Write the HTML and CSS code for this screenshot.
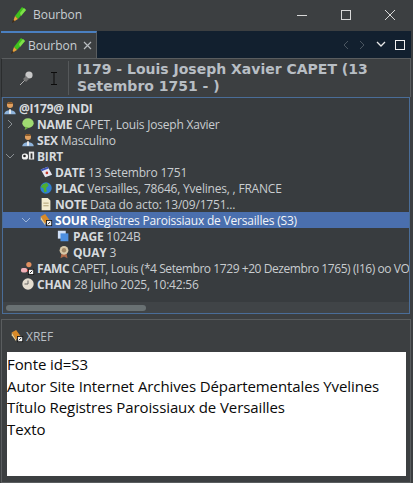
FILE: index.html
```html
<!DOCTYPE html>
<html>
   <head>
      <meta charset="UTF-8">
      <title>Bourbon</title>
      <link rel="stylesheet" href="styles.css">
   </head>
   <body>
      <div class="titlebar">
         <svg class="app-icon" width="16" height="16" viewBox="0 0 16 16"><use href="#pencil"/></svg>
         <span class="title">Bourbon</span>
         <div class="win-buttons">
            <svg width="12" height="12" viewBox="0 0 12 12"><path d="M1 6.5h10" stroke="#d8d8d8" fill="none"/></svg>
            <svg width="12" height="12" viewBox="0 0 12 12"><rect x="1.5" y="1.5" width="9" height="9" stroke="#d8d8d8" fill="none"/></svg>
            <svg width="12" height="12" viewBox="0 0 12 12"><path d="M1 1l10 10M11 1L1 11" stroke="#d8d8d8" fill="none"/></svg>
         </div>
      </div>

      <div class="tabbar">
         <div class="tab">
            <svg class="app-icon" width="16" height="16" viewBox="0 0 16 16"><use href="#pencil"/></svg>
            <span>Bourbon</span>
            <svg class="tab-close" width="9" height="9" viewBox="0 0 9 9"><path d="M1 1l7 7M8 1L1 8" stroke="#b8bcc0" stroke-width="1.2" fill="none"/></svg>
         </div>
         <div class="tab-tools">
            <svg width="8" height="10" viewBox="0 0 8 10"><path d="M6 1L2 5l4 4" stroke="#4a5560" fill="none"/></svg>
            <svg width="8" height="10" viewBox="0 0 8 10"><path d="M2 1l4 4-4 4" stroke="#4a5560" fill="none"/></svg>
            <svg class="tool-chevron" width="10" height="7" viewBox="0 0 10 7"><path d="M1 1l4 4 4-4" stroke="#e8e8e8" stroke-width="1.3" fill="none"/></svg>
            <svg width="10" height="10" viewBox="0 0 10 10"><rect x="0.5" y="0.5" width="9" height="9" stroke="#f0f0f0" fill="none"/></svg>
         </div>
      </div>

      <div class="main">
         <div class="header">
            <svg class="pin" width="16" height="16" viewBox="0 0 16 16"><path d="M1 15l5-5" stroke="#b0b0b0"/><circle cx="10" cy="5" r="3.6" fill="#c8c8c8"/><path d="M4 9l3-3 3 3-3 3z" fill="#777"/></svg>
            <svg class="cursor" width="8" height="13" viewBox="0 0 8 13"><path d="M1 .5h6M1 12.500h6M4 .5v12" stroke="#0c0c0c" fill="none"/></svg>
            <div class="header-title">I179 - Louis Joseph Xavier CAPET (13 Setembro 1751 - )</div>
         </div>

         <div class="tree">
            <div class="row">
               <svg class="ico" viewBox="0 0 16 16"><use href="#person"/></svg>
               <span class="txt"><b>@I179@ INDI</b></span>
            </div>
            <div class="row lv1">
               <svg class="twist" viewBox="0 0 10 10"><path d="M3 1l4 4-4 4" stroke="#8a8f93" fill="none"/></svg>
               <svg class="ico" viewBox="0 0 16 16"><ellipse cx="8" cy="7" rx="6.500" ry="5.500" fill="#9fdc72"/><path d="M5 11l-1 4 5-3z" fill="#6eb04a"/></svg>
               <span class="txt"><b>NAME</b> CAPET, Louis Joseph Xavier</span>
            </div>
            <div class="row no-twist">
               <svg class="ico" viewBox="0 0 16 16"><use href="#person"/></svg>
               <span class="txt"><b>SEX</b> Masculino</span>
            </div>
            <div class="row lv1">
               <svg class="twist" viewBox="0 0 10 10"><path d="M1 3l4 4 4-4" stroke="#8a8f93" fill="none"/></svg>
               <svg class="ico" viewBox="0 0 16 16"><rect x="1" y="5" width="7" height="7" rx="3" fill="#f2f2f2"/><circle cx="4" cy="8" r="1.500" fill="#222"/><rect x="9" y="3" width="6" height="9" fill="#e8e8e8"/><rect x="11" y="5" width="2" height="6" fill="#333"/></svg>
               <span class="txt"><b>BIRT</b></span>
            </div>
            <div class="row lv2">
               <svg class="ico" viewBox="0 0 16 16"><path d="M2 5l8-3 5 9-8 3z" fill="#e6e6f0"/><path d="M2 5l8-3 1 2-8 3z" fill="#3c52b8"/><circle cx="9" cy="9" r="1.500" fill="#c0392b"/></svg>
               <span class="txt"><b>DATE</b> 13 Setembro 1751</span>
            </div>
            <div class="row lv2">
               <svg class="ico" viewBox="0 0 16 16"><circle cx="8" cy="8" r="6.500" fill="#2f7fd0"/><path d="M4 4l5-2 2 3-3 3 1 4-3 1-1-5-3-1z" fill="#4fae2f"/></svg>
               <span class="txt"><b>PLAC</b> Versailles, 78646, Yvelines, , FRANCE</span>
            </div>
            <div class="row lv2">
               <svg class="ico" viewBox="0 0 16 16"><path d="M3 1h7l3 3v11H3z" fill="#f4ecd0"/><path d="M5 7h6M5 10h6" stroke="#a89868"/></svg>
               <span class="txt"><b>NOTE</b> Data do acto: 13/09/1751...</span>
            </div>
            <div class="row selected">
               <svg class="twist" viewBox="0 0 10 10"><path d="M1 3l4 4 4-4" stroke="#9fb6d8" fill="none"/></svg>
               <svg class="ico" viewBox="0 0 16 16"><use href="#book"/></svg>
               <span class="txt"><b>SOUR</b> Registres Paroissiaux de Versailles (S3)</span>
            </div>
            <div class="row lv3">
               <svg class="ico" viewBox="0 0 16 16"><rect x="1" y="2" width="9" height="9" fill="#cfe0f8"/><rect x="4" y="5" width="9" height="9" fill="#4d8fe0"/></svg>
               <span class="txt"><b>PAGE</b> 1024B</span>
            </div>
            <div class="row lv3">
               <svg class="ico" viewBox="0 0 16 16"><path d="M5 10l-1 5 4-2 4 2-1-5z" fill="#b06a4a"/><circle cx="8" cy="6" r="5" fill="#d8c8a8"/><circle cx="8" cy="6" r="2.500" fill="#a08868"/></svg>
               <span class="txt"><b>QUAY</b> 3</span>
            </div>
            <div class="row no-twist">
               <svg class="ico" viewBox="0 0 16 16"><circle cx="9" cy="4" r="3" fill="#e09060"/><path d="M5 12c0-4 8-4 8 0z" fill="#c0392b"/><rect x="0" y="8" width="7" height="5" rx="2" fill="#f0b0b8"/><rect x="8" y="9" width="7" height="7" fill="#111"/><rect x="9" y="10" width="5" height="5" fill="#f5f5f5"/><path d="M10 14l3-3" stroke="#111"/></svg>
               <span class="txt tight"><b>FAMC</b> CAPET, Louis (*4 Setembro 1729 +20 Dezembro 1765) (I16) oo VO</span>
            </div>
            <div class="row no-twist">
               <svg class="ico" viewBox="0 0 16 16"><circle cx="8" cy="8" r="6.500" fill="#e4ddd0"/><path d="M8 4v4H4" stroke="#555" fill="none"/></svg>
               <span class="txt"><b>CHAN</b> 28 Julho 2025, 10:42:56</span>
            </div>
            <div class="tree-fill"></div>
            <div class="hscroll"><div class="hscroll-thumb"></div></div>
         </div>

         <div class="xref">
            <div class="xref-head">
               <svg class="ico" viewBox="0 0 16 16"><use href="#book"/></svg>
               <span>XREF</span>
            </div>
            <div class="xref-body">
               <div>Fonte id=S3</div>
               <div>Autor Site Internet Archives Départementales Yvelines</div>
               <div>Título Registres Paroissiaux de Versailles</div>
               <div>Texto</div>
            </div>
         </div>
      </div>

      <svg class="defs" width="0" height="0">
         <defs>
            <g id="pencil">
               <path d="M5 9L12 0l4 3-8 9z" fill="#3fc21c"/>
               <path d="M10 6l4-5 2 2-5 6z" fill="#7fe04a"/>
               <path d="M5 9l3 3-5 3z" fill="#e8a33c"/>
               <path d="M2 16l1-3 2 1z" fill="#3a2410"/>
            </g>
            <g id="person">
               <circle cx="8" cy="4.500" r="3.500" fill="#e0a060"/>
               <path d="M4.500 3.500c1-3 6-3 7 0z" fill="#8a5a2a"/>
               <path d="M1.500 15c0-6 13-6 13 0z" fill="#8fb4dc"/>
               <path d="M7 9.500h2v5H7z" fill="#f4f4f4"/>
            </g>
            <g id="book">
               <path d="M2 4l5-3 5 7-5 4z" fill="#d98a28"/>
               <path d="M2 4l5 8v2L2 7z" fill="#f0d090"/>
               <rect x="8" y="8" width="7" height="7" fill="#111"/>
               <rect x="9" y="9" width="5" height="5" fill="#f5f5f5"/>
               <path d="M10 13l3-3" stroke="#111"/>
            </g>
         </defs>
      </svg>
   </body>
</html>
```
FILE: styles.css
```css
*
{
   box-sizing: border-box;
}

html, body
{
   height: 100%;
}

body
{
   width: 413px;
   height: 483px;
   margin: 0;
   overflow: hidden;
   background: #3c3f41;
   color: #d4d8db;
   font-family: "Open Sans", "Noto Sans", sans-serif;
   font-size: 12px;
}

.defs
{
   display: block;
}

.titlebar
{
   display: flex;
   align-items: center;
   height: 31px;
   padding: 0 0 2px 10px;
}

.title
{
   margin-left: 7px;
   font-size: 12px;
   color: #c8ced2;
}

.win-buttons
{
   display: flex;
   gap: 32px;
   margin-left: auto;
   padding-right: 17px;
}

.win-buttons svg
{
   display: block;
}

.tabbar
{
   display: flex;
   height: 27px;
   margin: 0 2px 0 1px;
   background: #12202f;
}

.tab
{
   display: flex;
   align-items: center;
   gap: 3px;
   width: 96px;
   padding: 0 0 0 8px;
   border-top: 2px solid #4a7fc0;
   border-right: 1px solid #5a5d5f;
   background: #3c3f41;
   font-size: 12px;
   color: #c8ced2;
}

.tab-close
{
   margin-left: 3px;
}

.tab-tools
{
   display: flex;
   align-items: center;
   gap: 8px;
   margin-left: auto;
   padding: 0 6px 0 0;
}

.tool-chevron
{
   margin-left: 2px;
   margin-right: 1px;
}

.main
{
   display: flex;
   flex-direction: column;
   height: 425px;
   margin: 0 2px 0 1px;
}

.header
{
   display: flex;
   align-items: center;
   height: 39px;
   padding-left: 17px;
   border-top: 1px solid #5a5d5f;
   border-right: 1px solid #5a5d5f;
   border-left: 1px solid #2b2d2e;
}

.pin
{
   flex: none;
}

.cursor
{
   flex: none;
   margin-left: 15px;
}

.header-title
{
   margin-left: 10px;
   padding-left: 8px;
   border-left: 1px solid #55585a;
   width: 326px;
   font-family: "DejaVu Sans", sans-serif;
   font-weight: bold;
   font-size: 14px;
   line-height: 17px;
   color: #b8bec4;
}

.tree
{
   display: flex;
   flex-direction: column;
   height: 217px;
   padding-top: 2px;
   border: 1px solid #4a6d98;
   background: #383c3f;
   margin: 0 1px 0 1px;
   overflow: hidden;
}

.row
{
   display: flex;
   flex: none;
   align-items: center;
   height: 16px;
   font-size: 12px;
   white-space: nowrap;
   color: #c9cdd0;
}

.row b
{
   color: #d6dade;
}

.ico
{
   flex: none;
   width: 14px;
   height: 14px;
   margin-right: 2px;
}

.twist
{
   flex: none;
   width: 10px;
   height: 10px;
   margin-right: 6px;
}

.txt
{
   letter-spacing: -0.2px;
}

.tight
{
   letter-spacing: -0.43px;
}

.lv1
{
   padding-left: 2px;
}

.no-twist
{
   padding-left: 18px;
}

.lv2
{
   padding-left: 36px;
}

.selected
{
   padding-left: 18px;
   background: #4a6fae;
   color: #f2f4f7;
}

.selected .twist
{
   margin-right: 8px;
}

.selected b
{
   color: #ffffff;
}

.lv3
{
   padding-left: 54px;
}

.tree-fill
{
   flex: 1;
}

.hscroll
{
   flex: none;
   height: 11px;
   padding: 3px 2px 2px 3px;
   background: #404447;
}

.hscroll-thumb
{
   width: 140px;
   height: 100%;
   border-radius: 3px;
   background: #697173;
}

.xref
{
   display: flex;
   flex: 1;
   flex-direction: column;
   margin-top: 5px;
   padding: 0 4px 6px 5px;
   border: 1px solid #5a5d5f;
}

.xref-head
{
   display: flex;
   align-items: center;
   height: 32px;
   padding: 0 0 0 3px;
   font-size: 12px;
   color: #b8bec4;
}

.xref-body
{
   flex: 1;
   padding-top: 2px;
   background: #ffffff;
   color: #0a0a0a;
   font-size: 15px;
   line-height: 21.7px;
   letter-spacing: -0.1px;
}
```
